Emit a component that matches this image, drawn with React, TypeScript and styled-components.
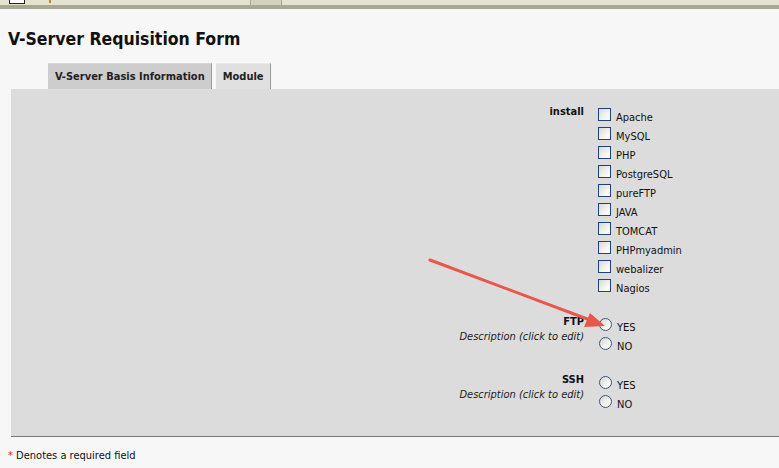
import styled, { createGlobalStyle } from "styled-components";

const GlobalStyle = createGlobalStyle`
  html, body {
    margin: 0;
    padding: 0;
    background: #f7f7f7;
    overflow: hidden;
  }
  body {
    font-family: "DejaVu Sans Condensed", "DejaVu Sans", Verdana, sans-serif;
    color: #111;
  }
`;

const Screen = styled.div`
  position: relative;
  width: 779px;
  height: 468px;
`;

const Chrome = styled.div`
  display: flex;
  align-items: flex-start;
  height: 5px;
  background: #e4e3cf;
  border-bottom: 1px solid #a8a791;
  box-shadow: 0 3px 0 0 #a8a791, 0 2px 0 0 #eeeddf;
  margin-bottom: 3px;
`;

const ChromeBox = styled.span`
  display: block;
  width: 14px;
  height: 3px;
  margin-left: 9px;
  background: #fff;
  border: 1px solid #222;
  border-top: none;
`;

const ChromeMark = styled.span`
  display: block;
  width: 2px;
  height: 3px;
  margin-left: 24px;
  background: #c88a20;
`;

const ChromeButton = styled.span`
  display: block;
  width: 30px;
  height: 5px;
  margin-left: 199px;
  background: #d3d2bd;
  border-left: 1px solid #a8a791;
  border-right: 1px solid #a8a791;
`;

const Page = styled.div`
  padding-left: 8px;
`;

const Title = styled.h1`
  margin: 22px 0 13px;
  font-size: 17.5px;
  line-height: 22px;
  font-weight: bold;
  color: #111;
`;

const Tabs = styled.div`
  display: flex;
  gap: 4px;
  margin-left: 40px;
  height: 26px;
`;

const Tab = styled.div<{ $active?: boolean }>`
  display: flex;
  align-items: center;
  padding: 0 6px 0 7px;
  height: 26px;
  box-sizing: border-box;
  font-size: 11px;
  font-weight: bold;
  color: #222;
  background: ${(p) => (p.$active ? "#e0e0e0" : "#cdcdcd")};
  border-right: 1px solid #9a9a9a;
  border-top: 1px solid ${(p) => (p.$active ? "#e8e8e8" : "#d6d6d6")};
`;

const Panel = styled.div`
  margin-left: 3px;
  background: #dcdcdc;
  border-bottom: 1px solid #777;
  padding: 19px 0 22px;
  display: flex;
  flex-direction: column;
  gap: 20px;
`;

const FieldRow = styled.div`
  display: grid;
  grid-template-columns: 573px auto;
  column-gap: 14px;
  align-items: start;
`;

const FieldLabel = styled.div`
  text-align: right;
  font-size: 11px;
  line-height: 15px;
  margin-top: -4px;
`;

const LabelName = styled.div`
  font-weight: bold;
  color: #111;
`;

const LabelHint = styled.div`
  font-style: italic;
  color: #222;
`;

const Options = styled.div`
  display: flex;
  flex-direction: column;
`;

const Option = styled.label`
  display: flex;
  align-items: flex-start;
  gap: 5px;
  height: 19px;
  font-size: 11px;
  line-height: 19px;
  color: #111;
`;

const Check = styled.span`
  display: block;
  width: 13px;
  height: 13px;
  box-sizing: border-box;
  border: 1px solid #22417a;
  background: linear-gradient(135deg, #d9d9d3 0%, #f4f4f0 60%, #ffffff 100%);
`;

const Radio = styled.span`
  display: block;
  width: 13px;
  height: 13px;
  margin-left: 1px;
  box-sizing: border-box;
  border: 1px solid #3e5681;
  border-radius: 50%;
  background: linear-gradient(135deg, #d6d6d0 0%, #f3f3ef 60%, #ffffff 100%);
`;

const Footer = styled.div`
  margin-top: 11px;
  font-size: 11px;
  line-height: 15px;
  color: #111;
`;

const Star = styled.span`
  color: #e0261e;
`;

const Arrow = styled.svg`
  position: absolute;
  left: 0;
  top: 0;
  pointer-events: none;
`;

const modules = [
  "Apache",
  "MySQL",
  "PHP",
  "PostgreSQL",
  "pureFTP",
  "JAVA",
  "TOMCAT",
  "PHPmyadmin",
  "webalizer",
  "Nagios",
];

const YesNo = ({ name }: { name: string }) => (
  <FieldRow>
    <FieldLabel>
      <LabelName>{name}</LabelName>
      <LabelHint>Description (click to edit)</LabelHint>
    </FieldLabel>
    <Options>
      <Option>
        <Radio />
        YES
      </Option>
      <Option>
        <Radio />
        NO
      </Option>
    </Options>
  </FieldRow>
);

const App = () => {
  return (
    <Screen>
      <GlobalStyle />
      <Chrome>
        <ChromeBox />
        <ChromeMark />
        <ChromeButton />
      </Chrome>
      <Page>
        <Title>V-Server Requisition Form</Title>
        <Tabs>
          <Tab>V-Server Basis Information</Tab>
          <Tab $active>Module</Tab>
        </Tabs>
        <Panel>
          <FieldRow>
            <FieldLabel>
              <LabelName>install</LabelName>
            </FieldLabel>
            <Options>
              {modules.map((m) => (
                <Option key={m}>
                  <Check />
                  {m}
                </Option>
              ))}
            </Options>
          </FieldRow>
          <YesNo name="FTP" />
          <YesNo name="SSH" />
        </Panel>
        <Footer>
          <Star>*</Star> Denotes a required field
        </Footer>
      </Page>
      <Arrow width="779" height="468" viewBox="0 0 779 468">
        <line
          x1="430"
          y1="260"
          x2="590"
          y2="320"
          stroke="#e9574a"
          strokeWidth="3"
          strokeLinecap="round"
        />
        <polygon points="605,326 584,327 590,313" fill="#e9574a" />
      </Arrow>
    </Screen>
  );
};

export default App;
